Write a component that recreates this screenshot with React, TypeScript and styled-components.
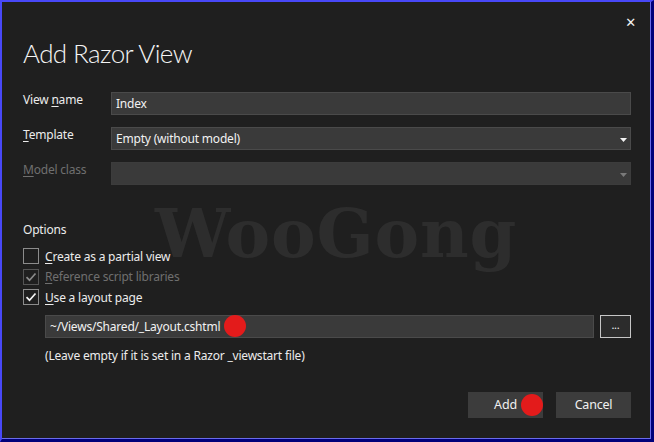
import styled, { createGlobalStyle } from "styled-components"

const GlobalStyle = createGlobalStyle`
    html, body {
        margin: 0;
        padding: 0;
        background: #000080;
        overflow: hidden;
    }
    * {
        box-sizing: border-box;
    }
`

const UI_FONT = `"Noto Sans", "Open Sans", "Noto Sans CJK KR", sans-serif`

export default function App() {
    return (
        <>
            <GlobalStyle />
            <Frame>
                <Dialog>
                    <Watermark>WooGong</Watermark>
                    <TopBar>
                        <Close aria-label="Close">✕</Close>
                    </TopBar>
                    <Title>Add Razor View</Title>

                    <Form>
                        <Label>
                            View <u>n</u>ame
                        </Label>
                        <Field>Index</Field>

                        <Label>
                            <u>T</u>emplate
                        </Label>
                        <Field>
                            Empty (without model)
                            <Caret />
                        </Field>

                        <Label $disabled>
                            <u>M</u>odel class
                        </Label>
                        <Field $disabled>
                            <Caret $disabled />
                        </Field>
                    </Form>

                    <Section>Options</Section>
                    <Checks>
                        <CheckRow>
                            <Box />
                            <span>
                                <u>C</u>reate as a partial view
                            </span>
                        </CheckRow>
                        <CheckRow $disabled>
                            <Box $disabled>
                                <Tick $disabled />
                            </Box>
                            <span>
                                <u>R</u>eference script libraries
                            </span>
                        </CheckRow>
                        <CheckRow>
                            <Box>
                                <Tick />
                            </Box>
                            <span>
                                <u>U</u>se a layout page
                            </span>
                        </CheckRow>
                    </Checks>

                    <LayoutRow>
                        <Field>
                            ~/Views/Shared/_Layout.cshtml
                            <Dot />
                        </Field>
                        <Browse>...</Browse>
                    </LayoutRow>
                    <Note>(Leave empty if it is set in a Razor _viewstart file)</Note>

                    <Footer>
                        <Button>
                            Add
                            <Dot $over />
                        </Button>
                        <Button>Cancel</Button>
                    </Footer>
                </Dialog>
            </Frame>
        </>
    )
}

function Caret({ $disabled }: { $disabled?: boolean }) {
    return (
        <CaretSvg width="7" height="4" viewBox="0 0 7 4">
            <path d="M0 0h7L3.5 4z" fill={$disabled ? "#7a7a7a" : "#f2f2f2"} />
        </CaretSvg>
    )
}

function Tick({ $disabled }: { $disabled?: boolean }) {
    return (
        <svg width="12" height="10" viewBox="0 0 12 10">
            <path
                d="M1.5 5.2l3 3L10.5 1.5"
                fill="none"
                stroke={$disabled ? "#8a8a8a" : "#f4f4f4"}
                strokeWidth="1.7"
            />
        </svg>
    )
}

const Frame = styled.div`
    width: 654px;
    height: 442px;
    border-style: solid;
    border-width: 2px 3px 3px 2px;
    border-color: #4848f8 #00007a #00007a #4848f8;
    background: #1f1f1f;
`

const Dialog = styled.div`
    position: relative;
    height: 100%;
    border-right: 1px solid #6a6ae8;
    border-bottom: 1px solid #6a6ae8;
    padding: 0 19px 0 21px;
    font-family: ${UI_FONT};
    font-size: 12px;
    letter-spacing: -0.2px;
    color: #f0f0f0;
    display: flex;
    flex-direction: column;
    overflow: hidden;

    u {
        text-underline-offset: 2px;
    }
`

const Watermark = styled.div`
    position: absolute;
    left: 153px;
    top: 192px;
    font-family: "DejaVu Serif", "Liberation Serif", serif;
    font-weight: 700;
    font-size: 67px;
    letter-spacing: 0.8px;
    color: #2d2d2d;
    pointer-events: none;
    user-select: none;
`

const TopBar = styled.div`
    display: flex;
    justify-content: flex-end;
    height: 33px;
    padding-top: 13px;
`

const Close = styled.div`
    font-size: 13px;
    line-height: 16px;
    font-weight: 700;
    color: #f0f0f0;
    margin-right: -5px;
    font-family: "DejaVu Sans", sans-serif;
`

const Title = styled.h1`
    margin: 0;
    font-family: "Lato", "Open Sans", sans-serif;
    font-weight: 300;
    font-size: 26px;
    letter-spacing: -0.6px;
    line-height: 36px;
    color: #f4f4f4;
    position: relative;
`

const Form = styled.div`
    position: relative;
    margin-top: 21px;
    display: grid;
    grid-template-columns: 88px 1fr;
    row-gap: 12px;
    align-items: center;
`

const Label = styled.div<{ $disabled?: boolean }>`
    color: ${(p) => (p.$disabled ? "#6f6f6f" : "#ececec")};
    align-self: start;
    line-height: 16px;
`

const Field = styled.div<{ $disabled?: boolean }>`
    position: relative;
    display: flex;
    align-items: center;
    height: 23px;
    padding: 0 4px;
    background: #3a3a3a;
    border: 1px solid ${(p) => (p.$disabled ? "#3c3c3c" : "#4a4a4a")};
    color: #f2f2f2;
    flex: 1;
`

const CaretSvg = styled.svg`
    position: absolute;
    right: 3px;
    top: 10px;
`

const Section = styled.div`
    position: relative;
    margin-top: 37px;
    line-height: 16px;
    color: #ececec;
`

const Checks = styled.div`
    position: relative;
    margin-top: 10px;
    display: flex;
    flex-direction: column;
    gap: 4px;
`

const CheckRow = styled.div<{ $disabled?: boolean }>`
    display: flex;
    align-items: center;
    gap: 6px;
    height: 16.5px;
    color: ${(p) => (p.$disabled ? "#6f6f6f" : "#ececec")};
`

const Box = styled.div<{ $disabled?: boolean }>`
    width: 16px;
    height: 16px;
    border: 1px solid ${(p) => (p.$disabled ? "#555555" : "#8c8c8c")};
    background: #1f1f1f;
    display: flex;
    align-items: center;
    justify-content: center;
`

const LayoutRow = styled.div`
    position: relative;
    margin-top: 9px;
    margin-left: 22px;
    display: flex;
    gap: 6px;
`

// red annotation marks; the one on the button sits over it
const Dot = styled.span<{ $over?: boolean }>`
    display: inline-block;
    width: 22px;
    height: 22px;
    border-radius: 50%;
    background: #e31b1b;
    margin-left: 4px;

    ${(p) =>
        p.$over &&
        `
        position: absolute;
        right: 0;
        top: 2px;
        margin: 0;
    `}
`

const Browse = styled.div`
    width: 31px;
    height: 23px;
    border: 1px solid #c6c6c6;
    background: #2c2c2c;
    display: flex;
    align-items: center;
    justify-content: center;
    font-size: 11px;
    line-height: 1;
    padding-bottom: 3px;
`

const Note = styled.div`
    position: relative;
    margin-top: 10px;
    margin-left: 22px;
    line-height: 16px;
    color: #ececec;
`

const Footer = styled.div`
    position: relative;
    margin-top: 28px;
    display: flex;
    justify-content: flex-end;
    gap: 13px;
`

const Button = styled.div`
    position: relative;
    width: 75px;
    height: 26px;
    background: #3c3c3c;
    display: flex;
    align-items: center;
    justify-content: center;
    color: #f0f0f0;
    font-size: 12.5px;
`
